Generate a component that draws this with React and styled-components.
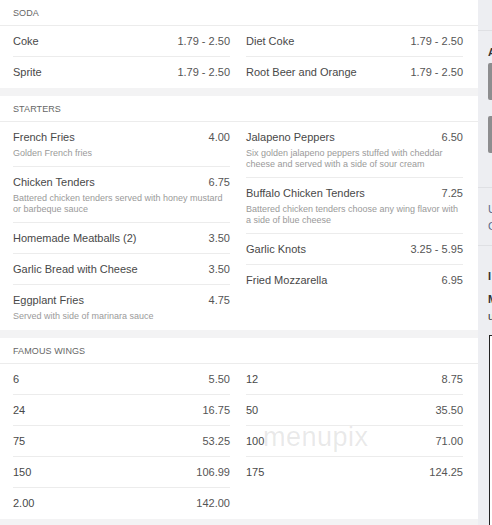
import React from "react";
import styled, { createGlobalStyle } from "styled-components";

const Global = createGlobalStyle`
  html, body { margin: 0; padding: 0; background: #edeef2; }
  body { font-family: "Liberation Sans", Arial, sans-serif; }
`;

const Page = styled.div`
  display: flex;
  width: 492px;
  height: 525px;
  overflow: hidden;
  background: #edeef2;
`;

const Main = styled.main`
  position: relative;
  width: 478px;
  flex: none;
  background: #f3f3f4;
  display: flex;
  flex-direction: column;
  gap: 8px;
`;

const Section = styled.section`
  background: #fff;
`;

const SectionHeader = styled.h2`
  margin: 0;
  height: 26px;
  box-sizing: border-box;
  display: flex;
  align-items: center;
  padding-left: 13px;
  font-size: 9px;
  font-weight: normal;
  letter-spacing: 0.1px;
  color: #666;
  text-transform: uppercase;
  border-bottom: 1px solid #ececec;
`;

const Grid = styled.div`
  display: grid;
  grid-template-columns: 217px 217px;
  column-gap: 16px;
  padding: 0 15px 0 13px;
`;

const Column = styled.div`
  display: flex;
  flex-direction: column;
`;

const Item = styled.div`
  padding: 8px 0 7px;
  border-bottom: 1px solid ${(p) => (p.$last ? "transparent" : "#ececec")};
`;

const ItemTop = styled.div`
  display: flex;
  justify-content: space-between;
  font-size: 11px;
  line-height: 15px;
`;

const Name = styled.span`
  color: #484848;
`;

const Price = styled.span`
  color: #555;
`;

const Desc = styled.div`
  margin-top: 3px;
  font-size: 9px;
  line-height: 11px;
  color: #9a9a9a;
`;

const Watermark = styled.div`
  position: absolute;
  left: 263px;
  top: 422px;
  font-family: "Liberation Sans", Arial, sans-serif;
  font-size: 27px;
  font-weight: 300;
  letter-spacing: 0.5px;
  color: rgba(120, 120, 120, 0.16);
  pointer-events: none;
`;

const Sidebar = styled.aside`
  flex: 1;
  display: flex;
  flex-direction: column;
  padding-left: 10px;
  overflow: hidden;
  font-family: "Liberation Sans", Arial, sans-serif;
`;

const SideRule = styled.div`
  height: 1px;
  margin-left: -10px;
  background: #dfe0e4;
  margin-top: ${(p) => p.$top}px;
`;

const SideText = styled.div`
  font-size: 11px;
  line-height: 14px;
  font-weight: ${(p) => (p.$bold ? "bold" : "normal")};
  color: ${(p) => p.$color || "#333"};
  margin-top: ${(p) => p.$top || 0}px;
`;

const SideBox = styled.div`
  height: 37px;
  width: 20px;
  background: #8d8d8f;
  border-radius: 2px;
  margin-top: ${(p) => p.$top}px;
`;

const SideFrame = styled.div`
  flex: 1;
  margin-top: 12px;
  margin-left: 1px;
  border: 1px solid #222;
  border-right: none;
  border-bottom: none;
  background: #fff;
`;

const soda = [
  [{ name: "Coke", price: "1.79 - 2.50" }, { name: "Sprite", price: "1.79 - 2.50" }],
  [{ name: "Diet Coke", price: "1.79 - 2.50" }, { name: "Root Beer and Orange", price: "1.79 - 2.50" }],
];

const starters = [
  [
    { name: "French Fries", price: "4.00", desc: "Golden French fries" },
    { name: "Chicken Tenders", price: "6.75", desc: "Battered chicken tenders served with honey mustard or barbeque sauce" },
    { name: "Homemade Meatballs (2)", price: "3.50" },
    { name: "Garlic Bread with Cheese", price: "3.50" },
    { name: "Eggplant Fries", price: "4.75", desc: "Served with side of marinara sauce" },
  ],
  [
    { name: "Jalapeno Peppers", price: "6.50", desc: "Six golden jalapeno peppers stuffed with cheddar cheese and served with a side of sour cream" },
    { name: "Buffalo Chicken Tenders", price: "7.25", desc: "Battered chicken tenders choose any wing flavor with a side of blue cheese" },
    { name: "Garlic Knots", price: "3.25 - 5.95" },
    { name: "Fried Mozzarella", price: "6.95" },
  ],
];

const wings = [
  [
    { name: "6", price: "5.50" },
    { name: "24", price: "16.75" },
    { name: "75", price: "53.25" },
    { name: "150", price: "106.99" },
    { name: "2.00", price: "142.00" },
  ],
  [
    { name: "12", price: "8.75" },
    { name: "50", price: "35.50" },
    { name: "100", price: "71.00" },
    { name: "175", price: "124.25" },
  ],
];

function MenuSection({ title, columns }) {
  return (
    <Section>
      <SectionHeader>{title}</SectionHeader>
      <Grid>
        {columns.map((col, ci) => (
          <Column key={ci}>
            {col.map((it, i) => (
              <Item key={i} $last={i === col.length - 1}>
                <ItemTop>
                  <Name>{it.name}</Name>
                  <Price>{it.price}</Price>
                </ItemTop>
                {it.desc && <Desc>{it.desc}</Desc>}
              </Item>
            ))}
          </Column>
        ))}
      </Grid>
    </Section>
  );
}

export default function App() {
  return (
    <>
      <Global />
      <Page>
        <Main>
          <MenuSection title="Soda" columns={soda} />
          <MenuSection title="Starters" columns={starters} />
          <MenuSection title="Famous Wings" columns={wings} />
          <Watermark>menupix</Watermark>
        </Main>
        <Sidebar>
          <SideRule $top={30} />
          <SideText $bold $top={14}>A</SideText>
          <SideBox $top={4} />
          <SideBox $top={16} />
          <SideRule $top={34} />
          <SideText $color="#5a6a8a" $top={14}>U</SideText>
          <SideText $color="#5a6a8a" $top={3}>C</SideText>
          <SideRule $top={12} />
          <SideText $bold $top={23}>I</SideText>
          <SideText $bold $top={9}>M</SideText>
          <SideText $top={3}>u</SideText>
          <SideFrame />
        </Sidebar>
      </Page>
    </>
  );
}
